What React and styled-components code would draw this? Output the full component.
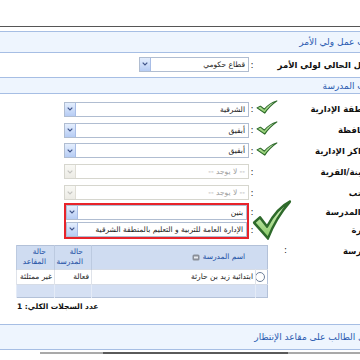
import styled, { createGlobalStyle } from "styled-components";

const GlobalStyle = createGlobalStyle`
  html, body {
    margin: 0;
    padding: 0;
    background: #fff;
  }
  body {
    width: 360px;
    height: 360px;
    overflow: hidden;
    font-family: "DejaVu Sans", "Noto Sans", sans-serif;
  }
`;

const Viewport = styled.div`
  width: 360px;
  height: 360px;
  overflow: hidden;
  direction: ltr;
`;

const Page = styled.div`
  width: 400px;
  direction: rtl;
`;

const TopRule = styled.div`
  height: 26px;
  border-bottom: 1px solid #565656;
  margin-bottom: 4px;
`;

const SectionHead = styled.div`
  height: ${(p) => p.$h}px;
  margin-top: ${(p) => p.$mt || 0}px;
  background: #eef5fe;
  border-top: 1px solid #a6bee4;
  border-bottom: 1px solid #a6bee4;
  display: flex;
  align-items: center;
  padding-right: ${(p) => p.$pr || 21}px;
  color: #2a5bb0;
  font-size: 9px;
  white-space: nowrap;
`;

const FormBody = styled.div`
  padding-top: 5px;
`;

const Row = styled.div`
  display: flex;
  align-items: ${(p) => (p.$top ? "flex-start" : "center")};
  height: ${(p) => p.$h}px;
  margin-top: ${(p) => p.$mt || 0}px;
`;

const Label = styled.div`
  flex: none;
  width: 105px;
  height: ${(p) => (p.$h ? `${p.$h}px` : "auto")};
  box-sizing: border-box;
  padding-right: 22px;
  padding-top: ${(p) => p.$pt || 0}px;
  display: flex;
  align-items: center;
  font-weight: bold;
  font-size: 8.5px;
  color: #111;
  white-space: nowrap;
`;

const Stack = styled.div`
  display: flex;
  flex-direction: column;
`;

const Mark = styled.div`
  flex: none;
  width: 40px;
  align-self: stretch;
  display: flex;
  align-items: center;
  justify-content: flex-end;
  position: relative;
`;

const TickSpot = styled.div`
  position: absolute;
  left: ${(p) => p.$l}px;
  top: ${(p) => p.$t}px;
  line-height: 0;
`;

const Colon = styled.div`
  flex: none;
  width: ${(p) => p.$w}px;
  height: ${(p) => (p.$h ? `${p.$h}px` : "auto")};
  box-sizing: border-box;
  padding-right: ${(p) => p.$pr || 0}px;
  display: flex;
  align-items: center;
  justify-content: ${(p) => (p.$pr ? "flex-start" : "center")};
  font-size: 9px;
  color: #222;
`;

const Field = styled.div`
  flex: none;
  width: ${(p) => p.$w}px;
  margin-top: ${(p) => p.$mt || 0}px;
`;

const RedBox = styled.div`
  width: 185px;
  box-sizing: border-box;
  border: 2px solid #e8232a;
  display: flex;
  flex-direction: column;
  gap: 2px;
`;

const Select = styled.div`
  box-sizing: border-box;
  width: ${(p) => (p.$w ? `${p.$w}px` : "100%")};
  height: 15px;
  display: flex;
  border: 1px solid ${(p) => (p.$off ? "#d6d6ce" : "#b0bdd1")};
  background: #fff;
`;

const Value = styled.span`
  flex: 1;
  min-width: 0;
  overflow: hidden;
  white-space: nowrap;
  padding: 0 3px;
  font-size: 7.5px;
  line-height: 13px;
  color: ${(p) => (p.$off ? "#a0a0a0" : "#222")};
`;

const Drop = styled.span`
  flex: none;
  width: 10px;
  display: flex;
  align-items: center;
  justify-content: center;
  background: ${(p) =>
    p.$off
      ? "linear-gradient(#f8f8f4, #ecebe5)"
      : "linear-gradient(#e4eefd, #b6ccf4)"};
  border-right: 1px solid ${(p) => (p.$off ? "#e0ded6" : "#a8bde6")};
`;

const Grid = styled.table`
  width: 251px;
  table-layout: fixed;
  border-collapse: collapse;
  font-size: 7.5px;
  border: 1px solid #b3c1d8;
  border-left-color: #9c9c9c;
`;

const Col = styled.col`
  width: ${(p) => p.$w}px;
`;

const HeadCell = styled.th`
  background: #cfdcf1;
  color: #1c4fa4;
  font-weight: normal;
  text-align: right;
  padding: 0 ${(p) => p.$pr || 8}px 0 0;
  height: 23px;
  line-height: 10px;
  border-left: 1px solid #bccae0;
  vertical-align: middle;
  white-space: nowrap;
`;

const HeadInner = styled.span`
  display: inline-flex;
  align-items: center;
  gap: 3px;
`;

const Cell = styled.td`
  height: ${(p) => p.$h}px;
  padding: 0 2px;
  text-align: right;
  white-space: nowrap;
  overflow: hidden;
  color: #222;
  background: ${(p) => (p.$foot ? "#d5e0f3" : "#fff")};
  border-left: 1px solid ${(p) => (p.$foot ? "#e4ebf7" : "#dfe3ea")};
  border-top: 1px solid #d6dce6;
`;

const Radio = styled.span`
  display: block;
  width: 8px;
  height: 8px;
  border: 1px solid #6d7f9a;
  border-radius: 50%;
  background: #fff;
  margin: 0 auto;
`;

const Count = styled.div`
  margin-top: 4px;
  text-align: left;
  font-weight: bold;
  font-size: 7.5px;
  color: #111;
`;

const ScrollTrack = styled.div`
  margin-top: 2px;
  display: flex;
  direction: ltr;
  width: 360px;
  height: 2px;
`;

const TrackPart = styled.div`
  width: ${(p) => p.$w}px;
  background: ${(p) => (p.$dark ? "#5a5a5a" : "#a9a9a9")};
`;

function Chevron({ off }) {
  return (
    <svg width="6" height="4" viewBox="0 0 6 4">
      <path
        d="M0.7 0.7 L3 3 L5.3 0.7"
        fill="none"
        stroke={off ? "#c4c4c0" : "#41558a"}
        strokeWidth="1.2"
      />
    </svg>
  );
}

function Tick({ w, h }) {
  return (
    <svg width={w} height={h} viewBox="0 0 40 32" preserveAspectRatio="none">
      <defs>
        <linearGradient id="tickfill" x1="0" y1="0" x2="0" y2="1">
          <stop offset="0" stopColor="#e2f7cf" />
          <stop offset="1" stopColor="#86c964" />
        </linearGradient>
      </defs>
      <path
        d="M2 18 L8 14 L15 21 C22 11 30 5 38 2 C30 9 22 18 16 30 Z"
        fill="url(#tickfill)"
        stroke="#2e6a2b"
        strokeWidth="2.2"
        strokeLinejoin="round"
      />
    </svg>
  );
}

function Dropdown({ value, w, off }) {
  return (
    <Select $w={w} $off={off}>
      <Value $off={off}>{value}</Value>
      <Drop $off={off}>
        <Chevron off={off} />
      </Drop>
    </Select>
  );
}

function SortIcon() {
  return (
    <svg width="8" height="7" viewBox="0 0 8 7">
      <rect x="0.5" y="0.5" width="7" height="6" rx="1.5" fill="#8a8f99" />
      <rect x="2" y="2.5" width="4" height="2" fill="#e8ebf0" />
    </svg>
  );
}

const fields = [
  { label: "المنطقة الإدارية", value: "الشرقية", tick: true },
  { label: "المحافظة", value: "أبقيق", tick: true },
  { label: "المراكز الإدارية", value: "أبقيق", tick: true },
  { label: "المدينة/القرية", value: "-- لا يوجد --", off: true },
  { label: "المكتب", value: "-- لا يوجد --", off: true },
];

export default function App() {
  return (
    <Viewport>
      <GlobalStyle />
      <Page>
        <TopRule />
        <SectionHead $h={20}>بيانات عمل ولي الأمر</SectionHead>
        <Row $h={24}>
          <Label>العمل الحالي لولي الأمر</Label>
          <Mark />
          <Colon $w={6}>:</Colon>
          <Field $w={110} $mt={-2}>
            <Dropdown value="قطاع حكومي" w={110} />
          </Field>
        </Row>
        <SectionHead $h={15}>بيانات المدرسة</SectionHead>

        <FormBody>
          {fields.map((f) => (
            <Row key={f.label} $h={20.8}>
              <Label>{f.label}</Label>
              <Mark>
                {f.tick && (
                  <TickSpot $l={1} $t={1}>
                    <Tick w={22} h={14} />
                  </TickSpot>
                )}
              </Mark>
              <Colon $w={6}>:</Colon>
              <Field $w={185}>
                <Dropdown value={f.value} off={f.off} />
              </Field>
            </Row>
          ))}

          <Row $h={36}>
            <Stack>
              <Label $h={18}>نوع المدرسة</Label>
              <Label $h={18}>الإدارة</Label>
            </Stack>
            <Mark>
              <TickSpot $l={-3} $t={-4}>
                <Tick w={40} h={42} />
              </TickSpot>
            </Mark>
            <Stack>
              <Colon $w={6} $h={18}>:</Colon>
              <Colon $w={6} $h={18}>:</Colon>
            </Stack>
            <Field $w={185}>
              <RedBox>
                <Dropdown value="بنين" />
                <Dropdown value="الإدارة العامة للتربية و التعليم بالمنطقة الشرقية" />
              </RedBox>
            </Field>
          </Row>

          <Row $top $mt={6}>
            <Label $pt={1}>المدرسة</Label>
            <Colon $w={27} $pr={8}>:</Colon>
            <Field $w={251}>
              <Grid>
                <colgroup>
                  <Col $w={12} />
                  <Col $w={164} />
                  <Col $w={37} />
                  <Col $w={38} />
                </colgroup>
                <thead>
                  <tr>
                    <HeadCell colSpan={2} $pr={22}>
                      <HeadInner>
                        اسم المدرسة
                        <SortIcon />
                      </HeadInner>
                    </HeadCell>
                    <HeadCell>
                      حالة
                      <br />
                      المدرسة
                    </HeadCell>
                    <HeadCell>
                      حالة
                      <br />
                      المقاعد
                    </HeadCell>
                  </tr>
                </thead>
                <tbody>
                  <tr>
                    <Cell $h={14}>
                      <Radio />
                    </Cell>
                    <Cell $h={14}>ابتدائية زيد بن حارثة</Cell>
                    <Cell $h={14}>فعالة</Cell>
                    <Cell $h={14}>غير ممتلئة</Cell>
                  </tr>
                  <tr>
                    <Cell $h={12} $foot />
                    <Cell $h={12} $foot />
                    <Cell $h={12} $foot />
                    <Cell $h={12} $foot />
                  </tr>
                </tbody>
              </Grid>
              <Count>عدد السجلات الكلي: 1</Count>
            </Field>
          </Row>
        </FormBody>

        <SectionHead $h={24} $mt={13} $pr={16}>
          تسجيل الطالب على مقاعد الإنتظار
        </SectionHead>
        <ScrollTrack>
          <TrackPart $w={63} />
          <TrackPart $w={185} $dark />
          <TrackPart $w={112} />
        </ScrollTrack>
      </Page>
    </Viewport>
  );
}
